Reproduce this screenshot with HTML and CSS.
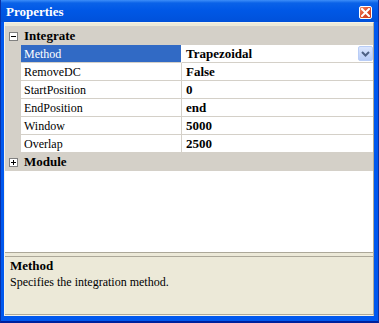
FILE: index.html
```html
<!DOCTYPE html>
<html>
<head>
<meta charset="utf-8">
<link rel="stylesheet" href="styles.css">
</head>
<body>
<div class="window">
  <div class="titlebar">
    <span class="title">Properties</span>
    <span class="close">
      <svg width="9" height="9" viewBox="0 0 9 9"><path d="M1 1 L8 8 M8 1 L1 8" stroke="#fff" stroke-width="2" stroke-linecap="square"/></svg>
    </span>
  </div>
  <div class="client">
    <div class="grid">
      <div class="cat first"><span class="box"><span class="minus"></span></span><span class="cat-label">Integrate</span></div>
      <div class="row selected"><div class="margin"></div><div class="name">Method</div><div class="value">Trapezoidal<span class="dd"><svg width="9" height="6" viewBox="0 0 9 6"><path d="M1 1 L4.5 4.5 L8 1" fill="none" stroke="#4d6185" stroke-width="2"/></svg></span></div></div>
      <div class="row"><div class="margin"></div><div class="name">RemoveDC</div><div class="value">False</div></div>
      <div class="row"><div class="margin"></div><div class="name">StartPosition</div><div class="value">0</div></div>
      <div class="row"><div class="margin"></div><div class="name">EndPosition</div><div class="value">end</div></div>
      <div class="row"><div class="margin"></div><div class="name">Window</div><div class="value">5000</div></div>
      <div class="row"><div class="margin"></div><div class="name">Overlap</div><div class="value">2500</div></div>
      <div class="cat"><span class="box"><span class="minus"></span><span class="vbar"></span></span><span class="cat-label">Module</span></div>
      <div class="empty"></div>
    </div>
    <div class="splitter"></div>
    <div class="desc">
      <div class="desc-title">Method</div>
      <div class="desc-text">Specifies the integration method.</div>
    </div>
  </div>
</div>
</body>
</html>
```
FILE: styles.css
```css
* { box-sizing: border-box; }
html, body { margin: 0; padding: 0; background: #fff; }
body { font-family: "Liberation Serif", "Times New Roman", serif; }

.window {
  width: 379px;
  height: 323px;
  display: flex;
  flex-direction: column;
  background: #0058ee;
  border: 1px solid #0831a8;
  border-top: none;
  border-bottom: 2px solid #00209c;
}

.titlebar {
  height: 22px;
  flex: none;
  display: flex;
  align-items: center;
  justify-content: space-between;
  padding: 0 6px 0 5px;
  background: linear-gradient(#3d8ef8 0px, #0a62e8 3px, #0058e6 10px, #0052dc 20px, #0050d8 22px);
}
.title {
  color: #fff;
  font-weight: bold;
  font-size: 13px;
  margin-top: 1px;
}
.close {
  width: 13px;
  height: 13px;
  border: 1px solid #fff;
  border-radius: 2px;
  background: linear-gradient(135deg, #f0906c 0%, #e0502e 45%, #c8381a 100%);
  display: flex;
  align-items: center;
  justify-content: center;
  margin-top: 3px;
}
.close svg { display: block; }

.client {
  flex: 1;
  display: flex;
  flex-direction: column;
  margin: 0 4px 5px 3px;
  background: #ece9d8;
  border: 1px solid #f4f2e8;
  border-right-color: #aca899;
  padding: 3px 0 0 0;
}

.grid {
  flex: 1;
  display: flex;
  flex-direction: column;
  background: #fff;
}

.cat {
  height: 18px;
  flex: none;
  background: #d4d0c8;
  display: flex;
  align-items: center;
  font-weight: bold;
  font-size: 13px;
}
.cat.first { height: 19px; padding-top: 1px; }
.box {
  position: relative;
  width: 9px;
  height: 9px;
  border: 1px solid #808080;
  background: #fff;
  margin: 0 6px 0 4px;
}
.minus {
  position: absolute;
  left: 1px;
  top: 3px;
  width: 5px;
  height: 1px;
  background: #000;
}
.vbar {
  position: absolute;
  left: 3px;
  top: 1px;
  width: 1px;
  height: 5px;
  background: #000;
}

.row {
  height: 18px;
  flex: none;
  display: grid;
  grid-template-columns: 16px 161px 1fr;
  font-size: 12px;
}
.margin { background: #d4d0c8; }
.name {
  padding: 2px 0 0 3px;
  border-bottom: 1px solid #d4d0c8;
  border-right: 1px solid #d4d0c8;
  color: #000;
  line-height: 14px;
}
.value {
  position: relative;
  padding: 2px 0 0 4px;
  border-bottom: 1px solid #d4d0c8;
  font-weight: bold;
  font-size: 13px;
  line-height: 14px;
}
.selected .name {
  background: #316ac5;
  color: #fff;
  border-right-color: #fff;
}
.dd {
  position: absolute;
  right: 0;
  top: 1px;
  width: 15px;
  height: 15px;
  border: 1px solid #b9cdf6;
  border-radius: 2px;
  background: linear-gradient(#dbe6fe, #b7ccf7);
  display: flex;
  align-items: center;
  justify-content: center;
}
.dd svg { display: block; }

.empty { flex: 1; }

.splitter {
  height: 5px;
  flex: none;
  border-top: 1px solid #aca899;
  border-bottom: 1px solid #aca899;
  background: #ece9d8;
}

.desc {
  height: 58px;
  flex: none;
  padding: 1px 0 0 5px;
  border-bottom: 1px solid #aca899;
}
.desc-title {
  font-weight: bold;
  font-size: 13px;
  line-height: 15px;
}
.desc-text {
  font-size: 12px;
  line-height: 15px;
  margin-top: 2px;
}
```
